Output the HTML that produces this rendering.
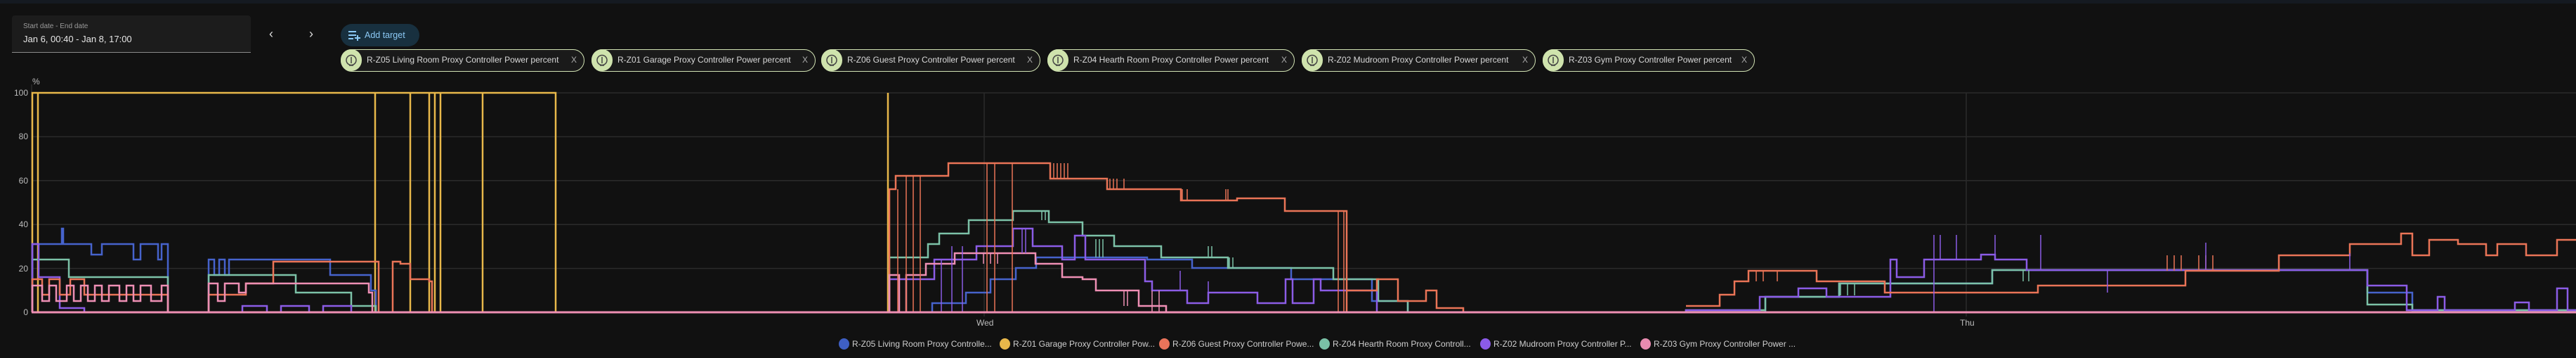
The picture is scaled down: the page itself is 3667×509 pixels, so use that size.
<!DOCTYPE html>
<html><head><meta charset="utf-8"><style>
*{margin:0;padding:0;box-sizing:border-box}
body{width:3667px;height:509px;background:#111111;position:relative;overflow:hidden;font-family:"Liberation Sans",sans-serif;color:#ddd}
.top{position:absolute;left:0;top:0;width:3667px;height:5px;background:#151a21}
.date{position:absolute;left:17px;top:22px;width:340px;height:53px;background:#1c1c1c;border-radius:4px 4px 0 0;border-bottom:1px solid #8a8a8a}
.date .l{position:absolute;left:16px;top:10px;font-size:10px;color:#9a9a9a}
.date .v{position:absolute;left:16px;top:26px;font-size:13px;color:#e6e6e6}
.chev{position:absolute;top:38px;font-size:18px;color:#ddd}
.add{position:absolute;left:485px;top:34px;width:112px;height:32px;border-radius:16px;background:#18303f;color:#8cc9f5;font-size:12.5px;line-height:32px;padding-left:34px}
.chip{position:absolute;top:70px;height:32px;border:1.5px solid #d2e3b4;border-radius:16px;background:#1a1a1a;font-size:12px;color:#d8d8d8;line-height:29px;padding-left:36px}
.chip .ic{position:absolute;left:-1px;top:-1px;width:30px;height:31px;border-radius:15px;background:#cfe3ad}
.chip .x{position:absolute;right:10px;top:0;color:#aaa;font-size:12px}
.yl{position:absolute;font-size:12px;color:#bdbdbd;text-align:right;width:30px;left:10px}
.xl{position:absolute;font-size:12px;color:#bdbdbd;top:452px}
.lg{position:absolute;top:481px;font-size:12px;color:#cfcfcf;line-height:16px;padding-left:19px;white-space:nowrap}
.lg i{position:absolute;left:0;top:0;width:15px;height:16px;border-radius:50%}
svg{position:absolute;left:0;top:0}
</style></head><body>
<div class="top"></div>
<div class="date"><div class="l">Start date - End date</div><div class="v">Jan 6, 00:40 - Jan 8, 17:00</div></div>
<div class="chev" style="left:383px">‹</div>
<div class="chev" style="left:440px">›</div>
<div class="add"><svg width="20" height="16" style="left:10px;top:8px"><g stroke="#8cc9f5" stroke-width="2"><path d="M1 3H12M1 8H12M1 13H8M14 8V16M10 12H18"/></g></svg>Add target</div>

<div class="chip" style="left:485px;width:347px"><span class="ic"><svg width="30" height="31"><circle cx="15" cy="15.5" r="7" fill="none" stroke="#444" stroke-width="1.5"/><path d="M15 11V20M12 23H18" stroke="#444" stroke-width="1.5"/></svg></span>R-Z05 Living Room Proxy Controller Power percent<span class="x">X</span></div>
<div class="chip" style="left:842px;width:319px"><span class="ic"><svg width="30" height="31"><circle cx="15" cy="15.5" r="7" fill="none" stroke="#444" stroke-width="1.5"/><path d="M15 11V20M12 23H18" stroke="#444" stroke-width="1.5"/></svg></span>R-Z01 Garage Proxy Controller Power percent<span class="x">X</span></div>
<div class="chip" style="left:1169px;width:312px"><span class="ic"><svg width="30" height="31"><circle cx="15" cy="15.5" r="7" fill="none" stroke="#444" stroke-width="1.5"/><path d="M15 11V20M12 23H18" stroke="#444" stroke-width="1.5"/></svg></span>R-Z06 Guest Proxy Controller Power percent<span class="x">X</span></div>
<div class="chip" style="left:1491px;width:352px"><span class="ic"><svg width="30" height="31"><circle cx="15" cy="15.5" r="7" fill="none" stroke="#444" stroke-width="1.5"/><path d="M15 11V20M12 23H18" stroke="#444" stroke-width="1.5"/></svg></span>R-Z04 Hearth Room Proxy Controller Power percent<span class="x">X</span></div>
<div class="chip" style="left:1853px;width:333px"><span class="ic"><svg width="30" height="31"><circle cx="15" cy="15.5" r="7" fill="none" stroke="#444" stroke-width="1.5"/><path d="M15 11V20M12 23H18" stroke="#444" stroke-width="1.5"/></svg></span>R-Z02 Mudroom Proxy Controller Power percent<span class="x">X</span></div>
<div class="chip" style="left:2196px;width:302px"><span class="ic"><svg width="30" height="31"><circle cx="15" cy="15.5" r="7" fill="none" stroke="#444" stroke-width="1.5"/><path d="M15 11V20M12 23H18" stroke="#444" stroke-width="1.5"/></svg></span>R-Z03 Gym Proxy Controller Power percent<span class="x">X</span></div>

<div class="yl" style="left:46px;top:109px;text-align:left">%</div>
<div class="yl" style="top:125px">100</div>
<div class="yl" style="top:187px">80</div>
<div class="yl" style="top:250px">60</div>
<div class="yl" style="top:312px">40</div>
<div class="yl" style="top:375px">20</div>
<div class="yl" style="top:437px">0</div>
<div class="xl" style="left:1390px">Wed</div>
<div class="xl" style="left:2790px">Thu</div>

<svg width="3667" height="509">
<g stroke="#2b2b2b" stroke-width="1.5">
<path d="M45 132H3667M45 194.4H3667M45 256.8H3667M45 319.2H3667M45 381.6H3667"/>
<path d="M1401 132V450M2799 132V450M45 120V444"/>
</g>
<g fill="none" stroke-width="2.5" stroke-linejoin="miter">
<path stroke="#e8b84a" d="M46 444V132H791V444M54 444V132M534 444V132M584 444V132M611 444V132M619 444V132M627 444V132M687 444V132M1264 444V132"/>
<path stroke="#4663cc" d="M46 444V347H88V325H90V347H130V362H145V347H190V369H200V347H225V369H230V347H239V444"/>
<path stroke="#4663cc" d="M297 444V369H305V391H312V369H320V391H326V369H470V391H528V413H535V444"/>
<path stroke="#4663cc" d="M1327 444V431H1375V416H1410V397H1446V381H1475V366H1633V369H1697V381H1838V397H1953V428H2004V444"/>
<path stroke="#4663cc" d="M2513 444V422H2618V403H2836V384H3370V416H3434V441H3667"/>
<path stroke="#7cc2a8" d="M46 444V369H98V394H239V444"/>
<path stroke="#7cc2a8" d="M297 444V391H421V416H500V435H535V444"/>
<path stroke="#7cc2a8" d="M1266 444V366H1321V347H1337V332H1379V313H1442V300H1493V316H1541V335H1586V350H1653V366H1748V381H1898V397H1962V428H2004V444"/>
<path stroke="#7cc2a8" d="M2400 444V441H2513V422H2618V403H2836V384H3370V433H3434V441H3667"/>
<path stroke="#8b5ce6" d="M46 444V347H55V394H85V438H120V444"/>
<path stroke="#8b5ce6" d="M345 444V435H380V444H400V435H440V444H460V435H500V444"/>
<path stroke="#8b5ce6" d="M1266 444V397H1330V369H1390V350H1442V325H1470V350H1512V369H1530V335H1545V369H1630V400H1640V413H1690V431H1720V416H1790V431H1830V397H1840V431H1870V397H1880V413H1960V444"/>
<path stroke="#8b5ce6" d="M2400 444V441H2505V422H2560V410H2600V422H2691V369H2700V394H2739V369H2820V362H2840V369H2885V384H3370V406H3426V441H3470V422H3480V441H3580V430H3600V441H3640V410H3655V441H3667"/>
<path stroke="#ea7457" d="M46 444V397H60V419H70V397H85V419H100V397H120V419H239V444"/>
<path stroke="#ea7457" d="M297 444V419H350V403H389V372H539V444M559 444V372H570V375H584V397H611V400H615V444"/>
<path stroke="#ea7457" d="M1266 444V269H1275V250H1350V232H1495V254H1576V269H1681V285H1761V282H1829V300H1917V444M1917 413H1960V397H1990V428H2030V413H2045V438H2083V444"/>
<path stroke="#ea7457" d="M2400 435H2448V419H2469V400H2489V385H2586V400H2683V416H2901V406H3111V385H3244V363H3345V347H3418V332H3434V363H3458V341H3499V347H3539V363H3555V347H3596V363H3640V341H3667"/>
<path stroke="#ee8fb4" d="M46 444V406H60V428H70V406H80V428H95V406H105V428H115V406H125V428H135V406H145V428H155V406H170V428H180V406H190V428H200V406H215V428H230V406H239V444"/>
<path stroke="#ee8fb4" d="M297 444V403H310V428H320V403H340V416H350V403H450V403H525V416H530V444"/>
<path stroke="#ee8fb4" d="M1266 444V391H1280V444H1290V391H1318V375H1359V360H1474V375H1512V394H1541V397H1560V413H1621V435H1660V444"/>
</g>
<g fill="none" stroke-width="1.5">
<path stroke="#ea7457" d="M1278 444V269M1290 444V250M1300 444V250M1310 444V250M1405 444V232M1416 444V232M1441 444V232M1500 232V254M1505 232V254M1510 232V254M1515 232V254M1520 232V254M1580 254V269M1585 254V269M1590 254V269M1600 254V269M1683 269V285M1690 269V285M1745 269V285M1748 269V285M1905 300V444M1913 300V444M3085 363V385M3095 363V385M3105 363V385M3130 363V385M3140 363V385M3150 363V385M2500 385V400M2510 385V400M2530 385V400"/>
<path stroke="#8b5ce6" d="M1340 444V369M1355 444V350M1370 444V350M1455 325V360M1460 325V360M1680 413V385M1720 431V400M2753 444V334M2762 369V334M2785 369V334M2840 369V334M2905 384V334M3000 416V384M3140 384V345M3345 384V360"/>
<path stroke="#7cc2a8" d="M1483 300V313M1488 300V313M1560 340V366M1565 340V366M1570 340V366M1720 350V366M1725 350V366M1750 366V381M1755 366V381M2620 403V420M2630 403V420M2640 403V420M2880 384V400M2888 384V400"/>
<path stroke="#ee8fb4" d="M1400 360V375M1410 360V375M1420 360V375M1600 413V435M1605 413V435M1640 413V444M1650 413V444"/>
</g>
<path stroke="#ee8fb4" stroke-width="3" d="M45 444H3667"/>
</svg>

<div class="lg" style="left:1194px"><i style="background:#3e5fc4"></i>R-Z05 Living Room Proxy Controlle...</div>
<div class="lg" style="left:1423px"><i style="background:#e8b84a"></i>R-Z01 Garage Proxy Controller Pow...</div>
<div class="lg" style="left:1650px"><i style="background:#e8735a"></i>R-Z06 Guest Proxy Controller Powe...</div>
<div class="lg" style="left:1878px"><i style="background:#7ac0a6"></i>R-Z04 Hearth Room Proxy Controll...</div>
<div class="lg" style="left:2107px"><i style="background:#8b5be8"></i>R-Z02 Mudroom Proxy Controller P...</div>
<div class="lg" style="left:2335px"><i style="background:#e88bb0"></i>R-Z03 Gym Proxy Controller Power ...</div>
</body></html>
